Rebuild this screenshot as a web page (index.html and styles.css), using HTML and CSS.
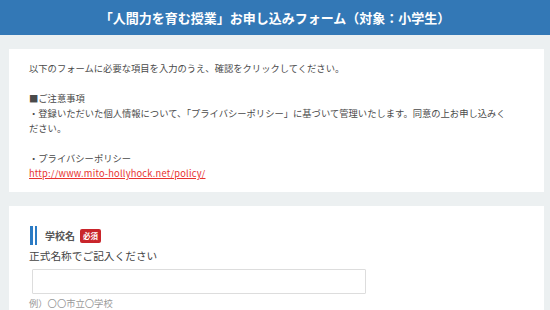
FILE: index.html
```html
<!DOCTYPE html>
<html lang="ja">
<head>
  <meta charset="UTF-8">
  <meta name="viewport" content="width=device-width, initial-scale=1.0">
  <title>お申し込みフォーム</title>
  <link rel="stylesheet" href="styles.css">
</head>
<body>
  <div class="header">
    <h1>「人間力を育む授業」お申し込みフォーム（対象：小学生）</h1>
  </div>

  <div class="container">
    <div class="card intro">
      <p>以下のフォームに必要な項目を入力のうえ、確認をクリックしてください。</p>
      <p class="blank">&nbsp;</p>
      <p>■ご注意事項</p>
      <p>・登録いただいた個人情報について、「プライバシーポリシー」に基づいて管理いたします。同意の上お申し込みください。</p>
      <p class="blank">&nbsp;</p>
      <p>・プライバシーポリシー</p>
      <p><a href="#">http://www.mito-hollyhock.net/policy/</a></p>
    </div>

    <div class="card form">
      <div class="field-title">
        <span class="bar"></span>
        <span class="name">学校名</span>
        <span class="required">必須</span>
      </div>
      <div class="field-note">正式名称でご記入ください</div>
      <input type="text" class="text-input">
      <div class="hint">例）〇〇市立〇学校</div>
    </div>
  </div>
</body>
</html>
```

FILE: styles.css
```css
body {
  font-family: "Noto Sans CJK JP", "Noto Sans", sans-serif;
  background-color: #ecf0f1;
  color: #4a4a4a;
  margin: 0;
  padding: 0;
}
.header {
  background-color: #3378b6;
  height: 35px;
  display: flex;
  align-items: center;
  justify-content: center;
}
.header h1 {
  margin: 0;
  font-size: 13px;
  font-weight: bold;
  color: #fff;
  line-height: 1;
}
.container {
  padding: 14px 6px 0 9px;
}
.card {
  background-color: #fff;
}
.intro {
  padding: 12px 31px 11px 20px;
  font-size: 9.3px;
  line-height: 15px;
}
.intro p {
  margin: 0;
}
.intro a {
  color: #e8322f;
  text-decoration: underline;
  letter-spacing: 0.2px;
}
.form {
  margin-top: 14px;
  padding: 20px 20px 0 20px;
  height: 120px;
}
.field-title {
  display: flex;
  align-items: center;
  height: 19px;
  margin-left: 1px;
}
.bar {
  height: 19px;
  border-left: 3px solid #2b7bc4;
  border-right: 2px solid #2b7bc4;
  box-sizing: border-box;
  width: 7px;
  margin-right: 8px;
}
.name {
  font-size: 10px;
  font-weight: bold;
  color: #555;
}
.required {
  margin-left: 5px;
  background-color: #c9252b;
  color: #fff;
  font-size: 7.5px;
  font-weight: bold;
  width: 21px;
  height: 14px;
  border-radius: 2px;
  display: flex;
  align-items: center;
  justify-content: center;
}
.field-note {
  font-size: 10.7px;
  color: #444;
  margin-top: 3px;
  line-height: 15px;
}
.text-input {
  display: block;
  margin: 6px 0 0 3px;
  width: 334px;
  height: 25px;
  box-sizing: border-box;
  border: 1px solid #ddd;
  border-radius: 1px;
}
.hint {
  font-size: 9.3px;
  color: #999;
  margin-top: 2px;
}
```
